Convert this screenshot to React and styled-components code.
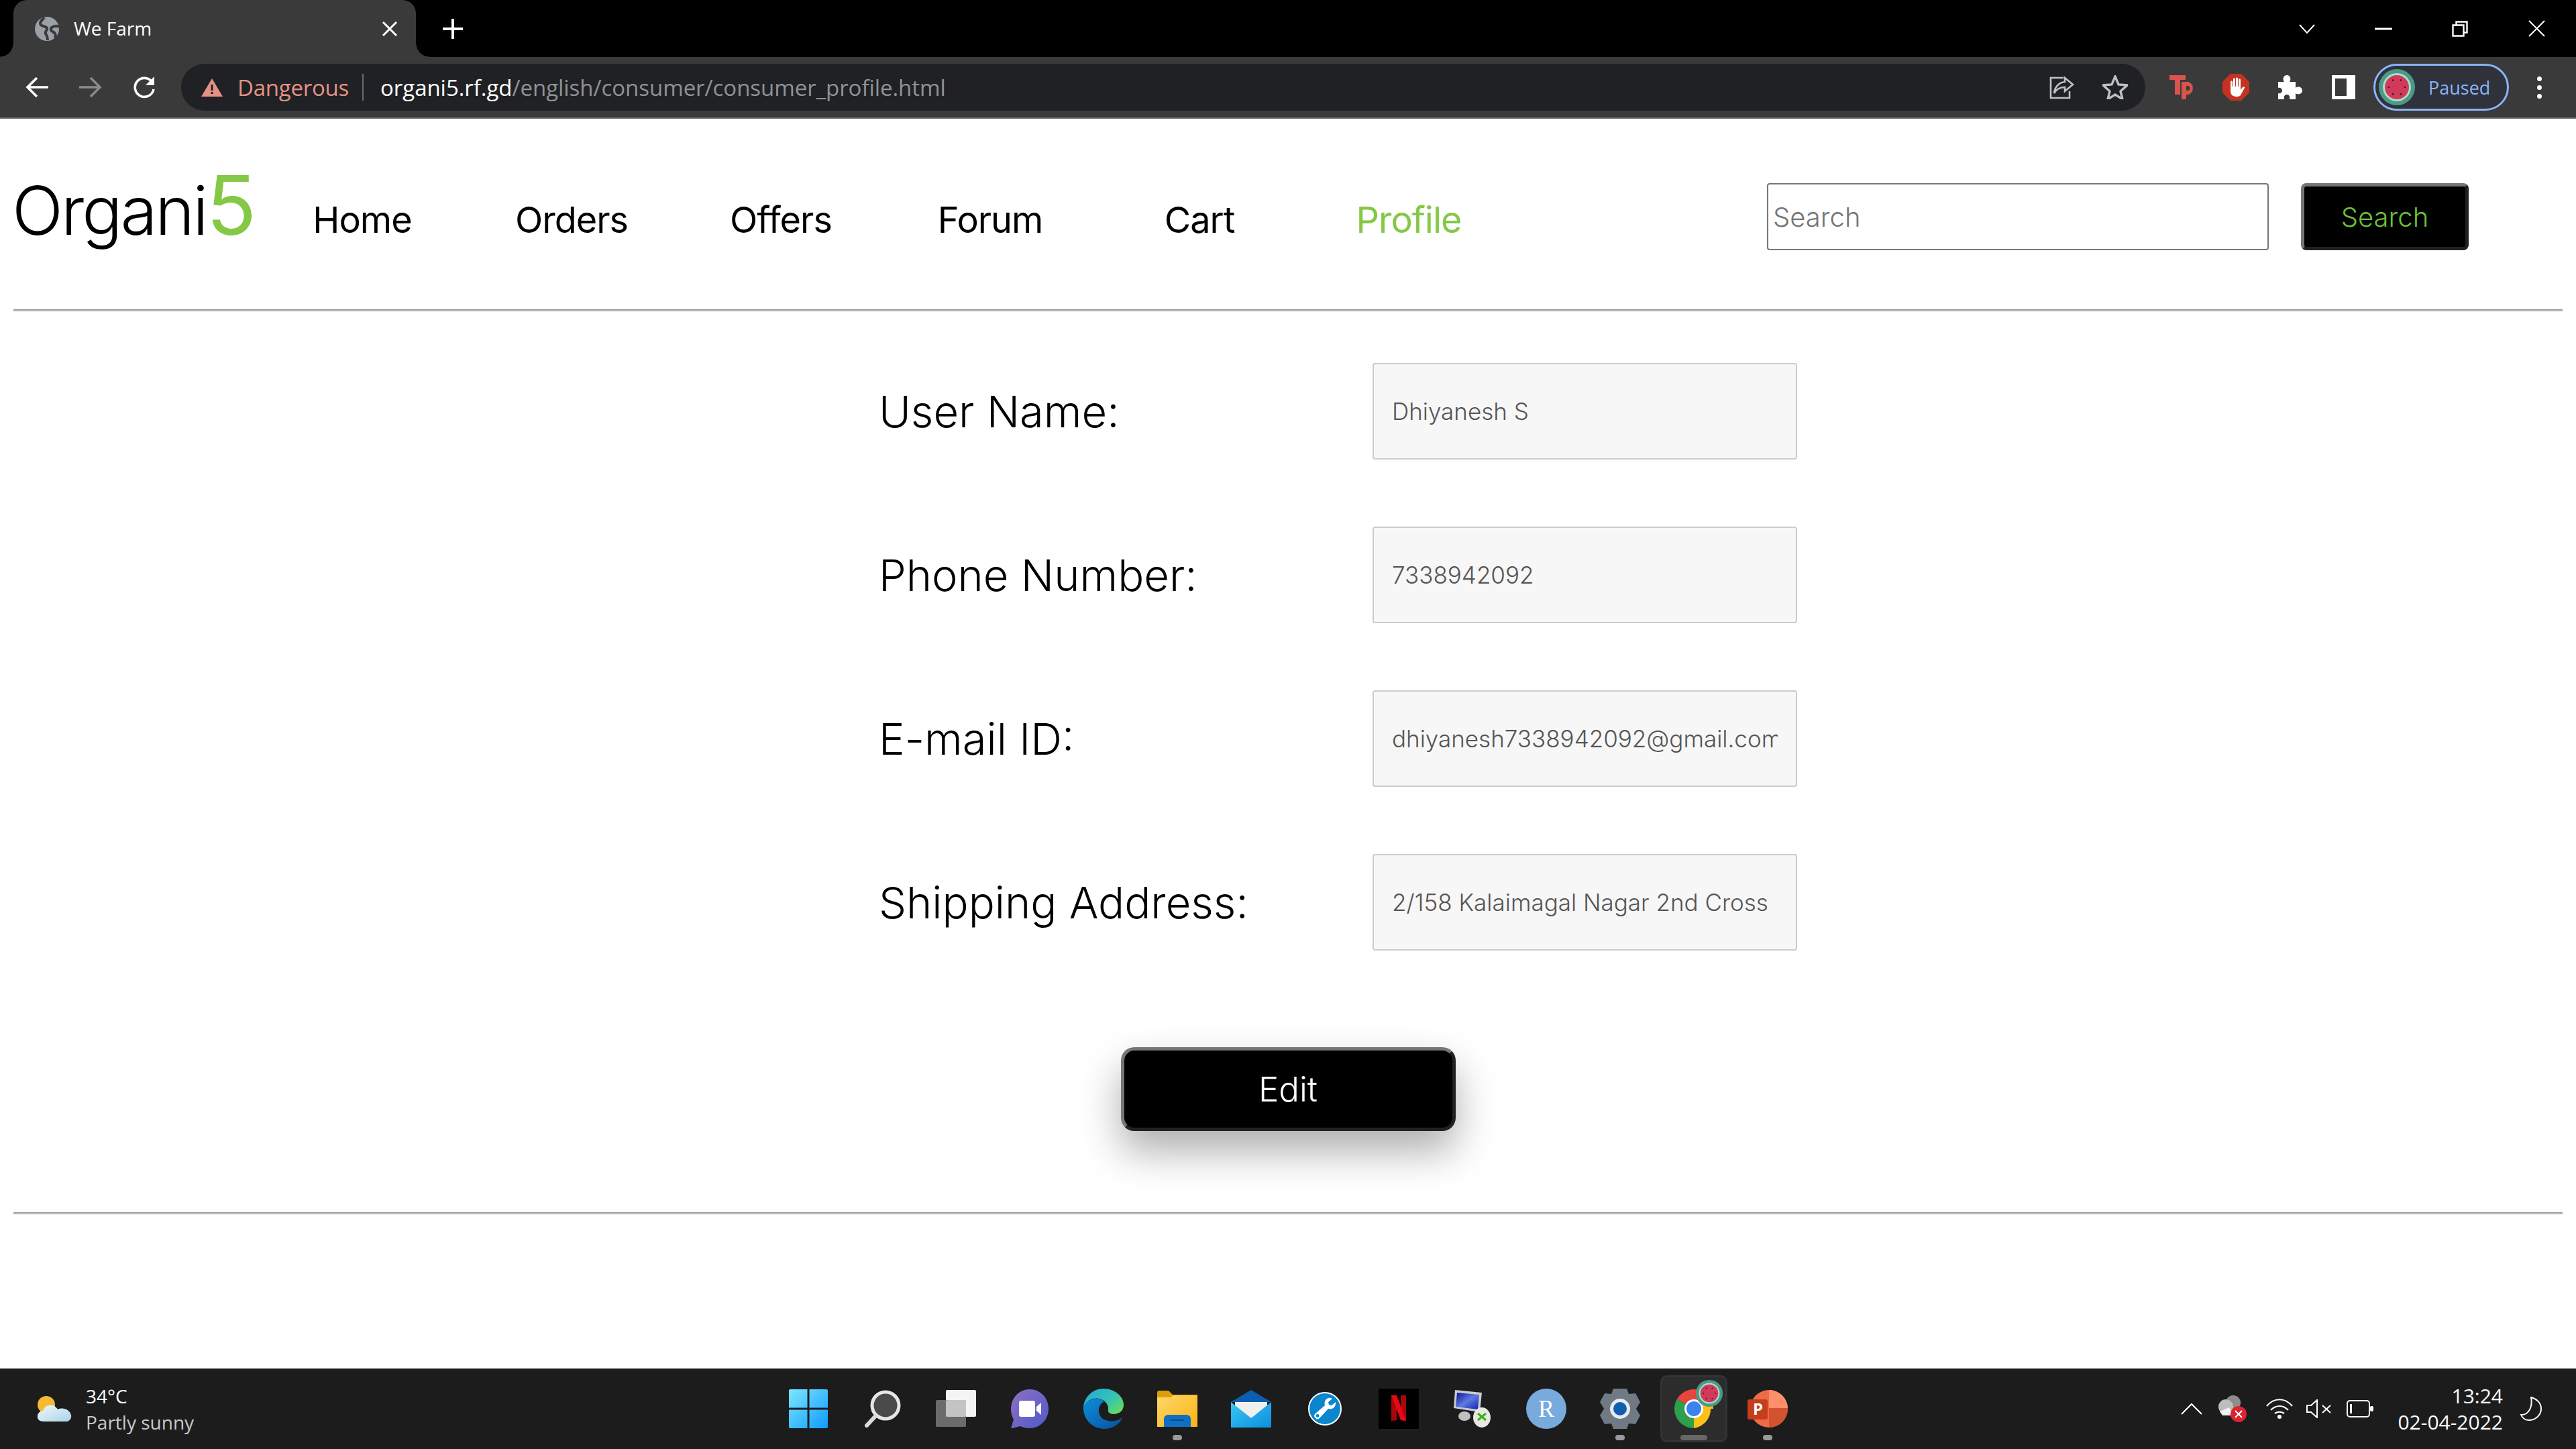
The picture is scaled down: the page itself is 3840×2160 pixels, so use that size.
import React from 'react';
import styled, { createGlobalStyle } from 'styled-components';

const GlobalStyle = createGlobalStyle`
  html, body {
    margin: 0;
    padding: 0;
    background: #fff;
  }
  * {
    box-sizing: border-box;
  }
`;

const PAGE_FONT = `Inter, "Open Sans", sans-serif`;
const UI_FONT = `"Open Sans", "Noto Sans", sans-serif`;

//Browser chrome
const Screen = styled.div`
  width: 3840px;
  height: 2160px;
  display: flex;
  flex-direction: column;
  overflow: hidden;
  font-family: ${PAGE_FONT};
`;

const TabStrip = styled.div`
  height: 85px;
  background: #000;
  display: flex;
  align-items: stretch;
  padding-left: 20px;
`;

const Tab = styled.div`
  position: relative;
  width: 600px;
  background: #3a3a3a;
  border-radius: 20px 20px 0 0;
  display: flex;
  align-items: center;
  padding: 0 28px 0 32px;
  font: 400 28px ${UI_FONT};
  color: #fff;
  &::before,
  &::after {
    content: '';
    position: absolute;
    bottom: 0;
    width: 20px;
    height: 20px;
    background: radial-gradient(circle at var(--cx) 0, #000 19px, #3a3a3a 20px);
  }
  &::before {
    --cx: 0;
    left: -20px;
  }
  &::after {
    --cx: 100%;
    right: -20px;
  }
`;

const TabTitle = styled.span`
  margin-left: 22px;
  flex: 1;
  padding-bottom: 2px;
`;

const NewTab = styled.div`
  margin-left: 40px;
  display: flex;
  align-items: center;
`;

const WindowControls = styled.div`
  margin-left: auto;
  padding-right: 2px;
  display: flex;
`;

const WindowButton = styled.div`
  width: 114px;
  display: flex;
  align-items: center;
  justify-content: center;
`;

const Toolbar = styled.div`
  height: 90px;
  background: #3a3a3a;
  display: flex;
  align-items: center;
  padding-left: 15px;
`;

const ToolButton = styled.div`
  width: 80px;
  height: 70px;
  display: flex;
  align-items: center;
  justify-content: center;
  flex: none;
`;

const AddressBar = styled.div`
  width: 2928px;
  height: 70px;
  margin: 0 15px;
  flex: none;
  border-radius: 35px;
  background: #202124;
  display: flex;
  align-items: center;
  padding: 0 5px 0 30px;
`;

const Dangerous = styled.span`
  margin-left: 22px;
  font: 400 33px ${UI_FONT};
  color: #e49286;
  letter-spacing: -0.25px;
`;

const Separator = styled.span`
  width: 2px;
  height: 40px;
  margin: 0 25px 0 20px;
  background: #6a6b6e;
`;

const Url = styled.span`
  flex: 1;
  font: 400 33px ${UI_FONT};
  color: #8f9296;
  letter-spacing: -0.05px;
  b {
    font-weight: 400;
    color: #fff;
  }
`;

const ProfilePill = styled.div`
  width: 202px;
  height: 70px;
  margin-left: 5px;
  flex: none;
  border: 3px solid #8ab4f8;
  border-radius: 35px;
  background: #2f323b;
  display: flex;
  align-items: center;
  padding-left: 5px;
  font: 400 27px ${UI_FONT};
  color: #8ab4f8;
  span {
    margin-left: 20px;
  }
`;

const Kebab = styled.div`
  margin-left: 5px;
  width: 80px;
  display: flex;
  flex-direction: column;
  align-items: center;
  gap: 6px;
  i {
    width: 7px;
    height: 7px;
    border-radius: 50%;
    background: #fff;
  }
`;

const ChromeEdge = styled.div`
  height: 2px;
  background: #6d6d6d;
`;

//Page
const Page = styled.main`
  flex: 1;
  background: #fff;
  padding: 0 20px;
  display: flex;
  flex-direction: column;
`;

const Header = styled.header`
  height: 284px;
  display: flex;
  align-items: flex-start;
`;

const Logo = styled.div`
  width: 364px;
  margin-top: 77px;
  margin-left: -2px;
  margin-right: 2px;
  font-size: 100px;
  font-weight: 350;
  line-height: 120px;
  letter-spacing: -3px;
  color: #000;
  white-space: nowrap;
  span {
    font-size: 123px;
    font-weight: 400;
    color: #84c845;
    line-height: 100px;
    letter-spacing: 0;
  }
`;

const Nav = styled.nav`
  display: grid;
  grid-template-columns: repeat(6, 312px);
  margin-top: 116px;
`;

const NavItem = styled.a`
  text-align: center;
  font-size: 54px;
  font-weight: 400;
  line-height: 70px;
  letter-spacing: -1px;
  color: ${props => (props.$active ? '#84c845' : '#000')};
`;

const SearchForm = styled.div`
  margin-top: 96px;
  margin-left: 378px;
  display: flex;
  gap: 48px;
`;

const SearchInput = styled.input`
  width: 748px;
  height: 100px;
  border: 2px solid #767676;
  border-radius: 4px;
  padding: 0 7px;
  background: #fff;
  font-family: ${PAGE_FONT};
  font-size: 40px;
  font-weight: 300;
  outline: none;
  &::placeholder {
    color: #757575;
    opacity: 1;
  }
`;

const SearchButton = styled.button`
  width: 250px;
  height: 100px;
  border: 5px solid;
  border-color: #767676 #212121 #212121 #767676;
  border-radius: 8px;
  background: #000;
  color: #6cc03a;
  font-family: ${PAGE_FONT};
  font-size: 40px;
  font-weight: 300;
`;

const Rule = styled.hr`
  width: 100%;
  height: 4px;
  margin: 0;
  flex: none;
  border: 0;
  border-top: 2px solid #9a9a9a;
  border-bottom: 2px solid #eee;
`;

const ProfileForm = styled.section`
  padding: 76px 0 121px;
  display: flex;
  flex-direction: column;
  align-items: center;
`;

const Fields = styled.div`
  width: 100%;
  padding-left: 1290px;
  display: flex;
  flex-direction: column;
  gap: 100px;
`;

const FieldRow = styled.label`
  display: grid;
  grid-template-columns: 736px 633px;
  align-items: center;
`;

const FieldLabel = styled.span`
  font-size: 65px;
  font-weight: 300;
  color: #000;
`;

const FieldInput = styled.input`
  height: 144px;
  width: 100%;
  border: 2px solid #ccc;
  border-radius: 4px;
  padding: 0 27px;
  background: #f7f7f7;
  font-family: ${PAGE_FONT};
  font-size: 35px;
  font-weight: 300;
  color: #555;
  outline: none;
`;

const EditButton = styled.button`
  width: 499px;
  height: 125px;
  margin-top: 144px;
  border: 5px solid;
  border-color: #767676 #212121 #212121 #767676;
  border-radius: 20px;
  background: #000;
  color: #fff;
  font-family: ${PAGE_FONT};
  font-size: 51px;
  font-weight: 300;
  box-shadow: 0 30px 60px rgba(0, 0, 0, 0.32);
`;

//Taskbar
const Taskbar = styled.footer`
  height: 120px;
  background: #1c1c1c;
  display: grid;
  grid-template-columns: 1fr auto 1fr;
  align-items: center;
  font-family: ${UI_FONT};
`;

const Weather = styled.div`
  display: flex;
  align-items: center;
  padding-left: 55px;
  gap: 21px;
`;

const WeatherText = styled.div`
  display: flex;
  flex-direction: column;
  font-size: 28px;
  line-height: 39px;
  color: #fff;
  padding-top: 2px;
  small {
    font-size: 28px;
    color: #c8c8c8;
  }
`;

const TaskIcons = styled.div`
  display: flex;
  gap: 10px;
  padding: 0 5px;
`;

const TaskItem = styled.div`
  position: relative;
  width: 100px;
  height: 100px;
  display: flex;
  align-items: center;
  justify-content: center;
  border-radius: 10px;
  ${props =>
    props.$active && 'background: #2c2c2c; box-shadow: inset 0 0 0 3px #333;'}
`;

const RunDot = styled.i`
  position: absolute;
  left: 50%;
  bottom: 3px;
  width: ${props => (props.$active ? '40px' : '14px')};
  height: 8px;
  transform: translateX(-50%);
  border-radius: 4px;
  background: ${props => (props.$active ? '#666' : '#9a9a9a')};
`;

const BadgeIcon = styled.div`
  position: absolute;
  top: 7px;
  left: 53px;
  display: flex;
`;

const Tray = styled.div`
  display: flex;
  align-items: center;
  justify-content: flex-end;
  color: #fff;
`;

const TrayIcon = styled.div`
  display: flex;
  margin-right: ${props => props.$gap}px;
`;

const Clock = styled.div`
  display: flex;
  flex-direction: column;
  align-items: flex-end;
  font-size: 30px;
  line-height: 39px;
  margin: 0 26px 0 0;
`;

const TrayEnd = styled.div`
  display: flex;
  margin-right: 51px;
`;

//Icons
const Glyph = ({ w = 60, h = 60, box, children }) => (
  <svg width={w} height={h} viewBox={box || `0 0 ${w} ${h}`} fill='none'>
    {children}
  </svg>
);

const Favicon = () => (
  <Glyph w={36} h={36}>
    <circle cx='18' cy='18' r='18' fill='#9aa0a6' />
    <path
      d='M14 1c-3 4-6 5-6 9 0 5 8 3 10 7 1 3-3 4-2 8 1 3 3 3 3 10M36 15c-4-2-8-1-11 1-3 3 0 6 3 7 3 2 3 6 2 9'
      stroke='#3a3a3a'
      strokeWidth='4'
    />
  </Glyph>
);

const Cross = ({ size = 22, width = 3 }) => (
  <Glyph w={size} h={size}>
    <path
      d={`M1 1L${size - 1} ${size - 1}M${size - 1} 1L1 ${size - 1}`}
      stroke='#fff'
      strokeWidth={width}
    />
  </Glyph>
);

const Plus = () => (
  <Glyph w={30} h={30}>
    <path d='M15 0v30M0 15h30' stroke='#fff' strokeWidth='4' />
  </Glyph>
);

const Arrow = ({ color, flip }) => (
  <Glyph w={34} h={32}>
    <path
      d={flip ? 'M0 16h31M17 2l14 14-14 14' : 'M34 16H3M17 2L3 16l14 14'}
      stroke={color}
      strokeWidth='3.6'
    />
  </Glyph>
);

const Reload = () => (
  <Glyph w={34} h={34}>
    <path d='M28.5 9A14 14 0 1 0 31 20' stroke='#fff' strokeWidth='3.6' />
    <path d='M32 1v13H19z' fill='#fff' />
  </Glyph>
);

const WarnTriangle = () => (
  <Glyph w={32} h={27}>
    <path d='M16 0l16 27H0z' fill='#e49286' />
    <path d='M14.5 9h3v9h-3zM14.5 20h3v3h-3z' fill='#202124' />
  </Glyph>
);

const Share = () => (
  <Glyph w={38} h={36}>
    <path
      d='M22 4H3v30h28V24M24 4l12 10-12 10v-6c-7 0-12 2-16 9 1-9 7-16 16-17z'
      stroke='#bdc1c6'
      strokeWidth='2.6'
    />
  </Glyph>
);

const Star = () => (
  <Glyph w={38} h={36}>
    <path
      d='M19 2l5 12 13 1-10 9 3 12-11-7-11 7 3-12L1 15l13-1z'
      stroke='#bdc1c6'
      strokeWidth='3.4'
    />
  </Glyph>
);

const TpLogo = () => (
  <Glyph w={38} h={36}>
    <path d='M0 0h24v7h-8v22H8V7H0z' fill='#d9544d' />
    <path
      d='M18 10h10a10 10 0 0 1 0 19h-3v7h-7zM25 16v7h2a3.500 3.500 0 0 0 0-7z'
      fill='#d9544d'
      fillRule='evenodd'
    />
  </Glyph>
);

const StopHand = () => (
  <Glyph w={40} h={40}>
    <path d='M12 0h16l12 12v16L28 40H12L0 28V12z' fill='#c53222' />
    <path
      d='M12 12c0-2 3-2 3 0v7h1V8c0-2 3-2 3 0v11h1V7c0-2 3-2 3 0v12h1V9c0-2 3-2 3 0v15l3-4c2-2 4 0 3 1l-5 9c-1 3-3 4-7 4-5 0-8-2-9-7z'
      fill='#fff'
    />
  </Glyph>
);

const Puzzle = () => (
  <Glyph w={38} h={36}>
    <path
      d='M2 10h9c-3-4-1-10 4-10s7 6 4 10h9v9c4-3 10-1 10 4s-6 7-10 4v9H19c1-5-1-7-4-7s-5 2-4 7H2v-9c3 1 6-1 6-4s-3-5-6-4z'
      fill='#fff'
    />
  </Glyph>
);

const SidePanel = () => (
  <Glyph w={35} h={36}>
    <path d='M0 0h35v36H0zM5 5v26h17V5z' fill='#fff' fillRule='evenodd' />
  </Glyph>
);

const Watermelon = ({ size = 54 }) => (
  <Glyph w={size} h={size} box='0 0 54 54'>
    <circle cx='27' cy='27' r='27' fill='#4b9a87' />
    <circle cx='27' cy='27' r='21' fill='#a8e0c8' />
    <circle cx='27' cy='27' r='18' fill='#d23a5c' />
    {[0, 60, 120, 180, 240, 300].map(a => (
      <circle
        key={a}
        cx={27 + 12 * Math.cos((a * Math.PI) / 180)}
        cy={27 + 12 * Math.sin((a * Math.PI) / 180)}
        r='1.300'
        fill='#3a1a22'
      />
    ))}
  </Glyph>
);

const Chevron = () => (
  <Glyph w={24} h={14}>
    <path d='M1 1l11 12L23 1' stroke='#fff' strokeWidth='2' />
  </Glyph>
);

const Minimize = () => (
  <Glyph w={26} h={4}>
    <path d='M0 2h26' stroke='#fff' strokeWidth='3' />
  </Glyph>
);

const Restore = () => (
  <Glyph w={24} h={24}>
    <path
      d='M1.500 6.500h16v16h-16zM6.500 6V1.500h16v16H18'
      stroke='#fff'
      strokeWidth='2.400'
    />
  </Glyph>
);

const WeatherIcon = () => (
  <Glyph w={52} h={40}>
    <defs>
      <linearGradient id='cloud' x1='0' y1='0' x2='1' y2='1'>
        <stop offset='0' stopColor='#f2f7fa' />
        <stop offset='1' stopColor='#a9d3ea' />
      </linearGradient>
    </defs>
    <circle cx='14' cy='14' r='13' fill='#f5b932' />
    <path
      d='M10 39C3 39 0 35 1 30c1-4 4-7 8-7 2-7 9-10 15-8 3 1 6 4 7 6 3-2 8-2 13 0 6 3 8 9 7 12-1 4-4 6-8 6z'
      fill='url(#cloud)'
    />
  </Glyph>
);

const WindowsIcon = () => (
  <Glyph w={58} h={58}>
    <defs>
      <linearGradient id='win' x1='0' y1='0' x2='1' y2='1'>
        <stop offset='0' stopColor='#7ce6ff' />
        <stop offset='1' stopColor='#0f9bff' />
      </linearGradient>
    </defs>
    <path
      d='M2 0h25.500v27.500H0V2a2 2 0 0 1 2-2zM30.500 0H56a2 2 0 0 1 2 2v25.500H30.500zM0 30.500h27.500V58H2a2 2 0 0 1-2-2zM30.500 30.500H58V56a2 2 0 0 1-2 2H30.500z'
      fill='url(#win)'
    />
  </Glyph>
);

const SearchIcon = () => (
  <Glyph w={56} h={58}>
    <circle cx='33' cy='24' r='20' fill='#4a4a4a' stroke='#e4e6e8' strokeWidth='5' />
    <path d='M18 40L5 54' stroke='#d8dadc' strokeWidth='6' strokeLinecap='round' />
  </Glyph>
);

const TaskViewIcon = () => (
  <Glyph w={60} h={56}>
    <rect x='15' y='0' width='45' height='40' rx='2' fill='#f4f4f4' />
    <rect x='0' y='15' width='45' height='40' rx='2' fill='#6b6b6b' />
    <rect x='15' y='15' width='30' height='25' rx='2' fill='#c4c4c4' />
  </Glyph>
);

const ChatIcon = () => (
  <Glyph w={56} h={58}>
    <defs>
      <linearGradient id='chat' x1='0' y1='0' x2='1' y2='1'>
        <stop offset='0' stopColor='#8f6fc4' />
        <stop offset='1' stopColor='#4f5ac8' />
      </linearGradient>
    </defs>
    <path
      d='M28 0c16 0 28 13 28 29S44 58 28 58c-5 0-10-1-14-3L2 58c-2 0-2-2-1-3l3-10C1 40 0 35 0 29 0 13 12 0 28 0z'
      fill='url(#chat)'
    />
    <rect x='12' y='17' width='24' height='24' rx='3' fill='#fff' />
    <path d='M38 26l7-6v18l-7-6z' fill='#fff' />
  </Glyph>
);

const EdgeIcon = () => (
  <Glyph w={60} h={60}>
    <defs>
      <linearGradient id='edgeA' x1='0' y1='0' x2='1' y2='0.800'>
        <stop offset='0' stopColor='#1fa9e0' />
        <stop offset='0.600' stopColor='#36c2b4' />
        <stop offset='1' stopColor='#66dd5c' />
      </linearGradient>
      <linearGradient id='edgeB' x1='0' y1='0' x2='1' y2='1'>
        <stop offset='0' stopColor='#0c8fdc' />
        <stop offset='1' stopColor='#0b4f9c' />
      </linearGradient>
    </defs>
    <path
      d='M30 0C14 0 2 12 0 27c6-10 15-14 24-12 8 2 14 9 13 16-1 4 2 7 8 7 8 0 15-5 15-14C60 11 46 0 30 0z'
      fill='url(#edgeA)'
    />
    <path
      d='M0 27c-1 19 14 33 31 33 13 0 23-7 27-17-9 7-21 7-29 2-8-6-9-20 2-26C22 10 6 16 0 27z'
      fill='url(#edgeB)'
    />
  </Glyph>
);

const FolderIcon = () => (
  <Glyph w={60} h={54}>
    <defs>
      <linearGradient id='folder' x1='0' y1='0' x2='1' y2='1'>
        <stop offset='0' stopColor='#ffd768' />
        <stop offset='1' stopColor='#fbb414' />
      </linearGradient>
    </defs>
    <path d='M0 3a3 3 0 0 1 3-3h14l6 6h37v8H0z' fill='#dd9e09' />
    <path d='M0 10h20l4-3h36v47H0z' fill='url(#folder)' />
    <path d='M10 54V42a6 6 0 0 1 6-6h28a6 6 0 0 1 6 6v12z' fill='#0f6fc4' />
    <path d='M20 44h20' stroke='#0a4c8a' strokeWidth='2' />
  </Glyph>
);

const MailIcon = () => (
  <Glyph w={60} h={56}>
    <defs>
      <linearGradient id='mail' x1='0' y1='0' x2='1' y2='1'>
        <stop offset='0' stopColor='#38c8f4' />
        <stop offset='1' stopColor='#0f8ce0' />
      </linearGradient>
    </defs>
    <path d='M30 0l30 18H0z' fill='#0c5fb0' />
    <path d='M6 18h48v10L30 42 6 28z' fill='#f0f0f0' />
    <path d='M0 18l30 24 30-24v38H0z' fill='url(#mail)' />
  </Glyph>
);

const WrenchIcon = () => (
  <Glyph w={50} h={50}>
    <circle cx='25' cy='25' r='24' fill='#0a86cc' stroke='#fff' strokeWidth='2' />
    <path
      d='M34 9c-6-1-11 4-9 11L11 32c-3 3-2 5 0 7s4 2 6 0l13-14c6 2 12-3 11-10l-6 5-4-1-1-4 6-5z'
      fill='#fff'
    />
    <circle cx='14' cy='35.500' r='2.400' fill='#0a86cc' />
  </Glyph>
);

const NetflixIcon = () => (
  <Glyph w={60} h={60}>
    <rect width='60' height='60' fill='#000' />
    <path d='M19 10h8v37l-8 1z' fill='#a8050c' />
    <path d='M33 10h8v38l-8-1z' fill='#a8050c' />
    <path d='M19 10h8l14 38-8-1z' fill='#e50914' />
  </Glyph>
);

const RemoteIcon = () => (
  <Glyph w={56} h={58}>
    <defs>
      <linearGradient id='rdp' x1='0' y1='0' x2='1' y2='1'>
        <stop offset='0' stopColor='#0b0f9c' />
        <stop offset='0.500' stopColor='#5f7be0' />
        <stop offset='1' stopColor='#0f1fb0' />
      </linearGradient>
    </defs>
    <path d='M2 1l40 4-3 29L0 28z' fill='#c8ccd0' />
    <path d='M5 5l33 3-2 22-33-4z' fill='url(#rdp)' />
    <ellipse cx='16' cy='40' rx='9' ry='7' fill='#c0c0c0' />
    <ellipse cx='42' cy='42' rx='13' ry='15' fill='#e8e8e0' />
    <path d='M36 36l6 5-6 5M48 36l-6 5 6 5' stroke='#35b020' strokeWidth='3' />
  </Glyph>
);

const RLetter = styled.div`
  width: 60px;
  height: 60px;
  border-radius: 50%;
  background: #78aadb;
  color: #fff;
  display: flex;
  align-items: center;
  justify-content: center;
  font: 400 36px 'Liberation Serif', serif;
`;

const GearIcon = () => (
  <Glyph w={60} h={60}>
    <path
      d='M20 0h20l3 8 10-1 7 13-6 10 6 10-7 13-10-1-3 8H20l-3-8-10 1-7-13 6-10-6-10L7 7l10 1z'
      fill='#6f7a85'
    />
    <circle cx='30' cy='30' r='15' fill='#e8eaec' />
    <circle cx='30' cy='30' r='10' fill='#0f5fb0' />
  </Glyph>
);

const ChromeIcon = () => (
  <Glyph w={58} h={58}>
    <path d='M29 29L3.900 14.500A29 29 0 0 1 54.100 14.500z' fill='#e8453c' />
    <path d='M29 29H54.100A29 29 0 0 1 29 58z' fill='#fbc116' />
    <path d='M54.100 14.500A29 29 0 0 1 58 29H29z' fill='#fbc116' />
    <path d='M29 29v29A29 29 0 0 1 3.900 14.500z' fill='#2f9e4f' />
    <circle cx='29' cy='29' r='14' fill='#fff' />
    <circle cx='29' cy='29' r='11' fill='#3b82ee' />
  </Glyph>
);

const PptIcon = () => (
  <Glyph w={60} h={56}>
    <circle cx='32' cy='28' r='28' fill='#ed6c47' />
    <path d='M32 0a28 28 0 0 1 28 27H32z' fill='#ff8f6b' />
    <path d='M32 27h28a28 28 0 0 1-28 29z' fill='#d35230' />
    <rect x='0' y='14' width='30' height='30' rx='3' fill='#c43e1c' />
    <text x='8' y='37' fill='#fff' fontSize='24' fontWeight='700' fontFamily='Open Sans'>
      P
    </text>
  </Glyph>
);

const CloudOff = () => (
  <Glyph w={42} h={40}>
    <circle cx='22' cy='11' r='11' fill='#8d8d8d' />
    <circle cx='11' cy='17' r='11' fill='#bdbdbd' />
    <path d='M2 24l14-6 6 12H6z' fill='#f2f2f2' />
    <circle cx='30' cy='28' r='12' fill='#dc2331' />
    <path d='M25 23l10 10M35 23L25 33' stroke='#fff' strokeWidth='2' />
  </Glyph>
);

const TrayChevron = () => (
  <Glyph w={32} h={18}>
    <path d='M1 17L16 2l15 15' stroke='#fff' strokeWidth='2' />
  </Glyph>
);

const Wifi = () => (
  <Glyph w={40} h={30}>
    <path
      d='M1 11c11-13 27-13 38 0M7 17c8-8 18-8 26 0M13 22c4-3 10-3 14 0'
      stroke='#fff'
      strokeWidth='2.200'
    />
    <circle cx='20' cy='27' r='3' fill='#fff' />
  </Glyph>
);

const Speaker = () => (
  <Glyph w={38} h={28}>
    <path d='M1 9h6l9-8v26l-9-8H1z' stroke='#fff' strokeWidth='2' />
    <path d='M24 9l12 11M36 9L24 20' stroke='#fff' strokeWidth='2' />
  </Glyph>
);

const Battery = () => (
  <Glyph w={40} h={26}>
    <rect x='1' y='1' width='33' height='24' rx='4' stroke='#fff' strokeWidth='2' />
    <rect x='5' y='6' width='3' height='14' fill='#fff' />
    <rect x='35' y='9' width='5' height='8' rx='2' fill='#fff' />
  </Glyph>
);

const Moon = () => (
  <Glyph w={32} h={36}>
    <path
      d='M16 1c8 2 15 8 15 17 0 10-9 17-18 17-5 0-10-3-12-8 9 1 18-9 15-26z'
      stroke='#fff'
      strokeWidth='2'
    />
  </Glyph>
);

const fields = [
  { label: 'User Name:', value: 'Dhiyanesh S' },
  { label: 'Phone Number:', value: '7338942092' },
  { label: 'E-mail ID:', value: 'dhiyanesh7338942092@gmail.com' },
  { label: 'Shipping Address:', value: '2/158 Kalaimagal Nagar 2nd Cross' },
];

const navLinks = ['Home', 'Orders', 'Offers', 'Forum', 'Cart', 'Profile'];

const taskItems = [
  { icon: <WindowsIcon /> },
  { icon: <SearchIcon /> },
  { icon: <TaskViewIcon /> },
  { icon: <ChatIcon /> },
  { icon: <EdgeIcon /> },
  { icon: <FolderIcon />, running: true },
  { icon: <MailIcon /> },
  { icon: <WrenchIcon /> },
  { icon: <NetflixIcon /> },
  { icon: <RemoteIcon /> },
  { icon: <RLetter>R</RLetter> },
  { icon: <GearIcon />, running: true },
  { icon: <ChromeIcon />, running: true, active: true },
  { icon: <PptIcon />, running: true },
];

const App = () => {
  return (
    <Screen>
      <GlobalStyle />
      <TabStrip>
        <Tab>
          <Favicon />
          <TabTitle>We Farm</TabTitle>
          <Cross />
        </Tab>
        <NewTab>
          <Plus />
        </NewTab>
        <WindowControls>
          <WindowButton>
            <Chevron />
          </WindowButton>
          <WindowButton>
            <Minimize />
          </WindowButton>
          <WindowButton>
            <Restore />
          </WindowButton>
          <WindowButton>
            <Cross size={25} width={2} />
          </WindowButton>
        </WindowControls>
      </TabStrip>
      <Toolbar>
        <ToolButton>
          <Arrow color='#fff' />
        </ToolButton>
        <ToolButton>
          <Arrow color='#8a8a8a' flip />
        </ToolButton>
        <ToolButton>
          <Reload />
        </ToolButton>
        <AddressBar>
          <WarnTriangle />
          <Dangerous>Dangerous</Dangerous>
          <Separator />
          <Url>
            <b>organi5.rf.gd</b>/english/consumer/consumer_profile.html
          </Url>
          <ToolButton>
            <Share />
          </ToolButton>
          <ToolButton>
            <Star />
          </ToolButton>
        </AddressBar>
        <ToolButton>
          <TpLogo />
        </ToolButton>
        <ToolButton>
          <StopHand />
        </ToolButton>
        <ToolButton>
          <Puzzle />
        </ToolButton>
        <ToolButton>
          <SidePanel />
        </ToolButton>
        <ProfilePill>
          <Watermelon />
          <span>Paused</span>
        </ProfilePill>
        <Kebab>
          <i />
          <i />
          <i />
        </Kebab>
      </Toolbar>
      <ChromeEdge />
      <Page>
        <Header>
          <Logo>
            Organi<span>5</span>
          </Logo>
          <Nav>
            {navLinks.map(link => (
              <NavItem key={link} $active={link === 'Profile'}>
                {link}
              </NavItem>
            ))}
          </Nav>
          <SearchForm>
            <SearchInput placeholder='Search' />
            <SearchButton>Search</SearchButton>
          </SearchForm>
        </Header>
        <Rule />
        <ProfileForm>
          <Fields>
            {fields.map(field => (
              <FieldRow key={field.label}>
                <FieldLabel>{field.label}</FieldLabel>
                <FieldInput readOnly value={field.value} />
              </FieldRow>
            ))}
          </Fields>
          <EditButton>Edit</EditButton>
        </ProfileForm>
        <Rule />
      </Page>
      <Taskbar>
        <Weather>
          <WeatherIcon />
          <WeatherText>
            <span>34°C</span>
            <small>Partly sunny</small>
          </WeatherText>
        </Weather>
        <TaskIcons>
          {taskItems.map((item, i) => (
            <TaskItem key={i} $active={item.active}>
              {item.icon}
              {item.active && (
                <BadgeIcon>
                  <Watermelon size={40} />
                </BadgeIcon>
              )}
              {item.running && <RunDot $active={item.active} />}
            </TaskItem>
          ))}
        </TaskIcons>
        <Tray>
          <TrayIcon $gap={24}>
            <TrayChevron />
          </TrayIcon>
          <TrayIcon $gap={29}>
            <CloudOff />
          </TrayIcon>
          <TrayIcon $gap={20}>
            <Wifi />
          </TrayIcon>
          <TrayIcon $gap={22}>
            <Speaker />
          </TrayIcon>
          <TrayIcon $gap={36}>
            <Battery />
          </TrayIcon>
          <Clock>
            <span>13:24</span>
            <span>02-04-2022</span>
          </Clock>
          <TrayEnd>
            <Moon />
          </TrayEnd>
        </Tray>
      </Taskbar>
    </Screen>
  );
};

export default App;
